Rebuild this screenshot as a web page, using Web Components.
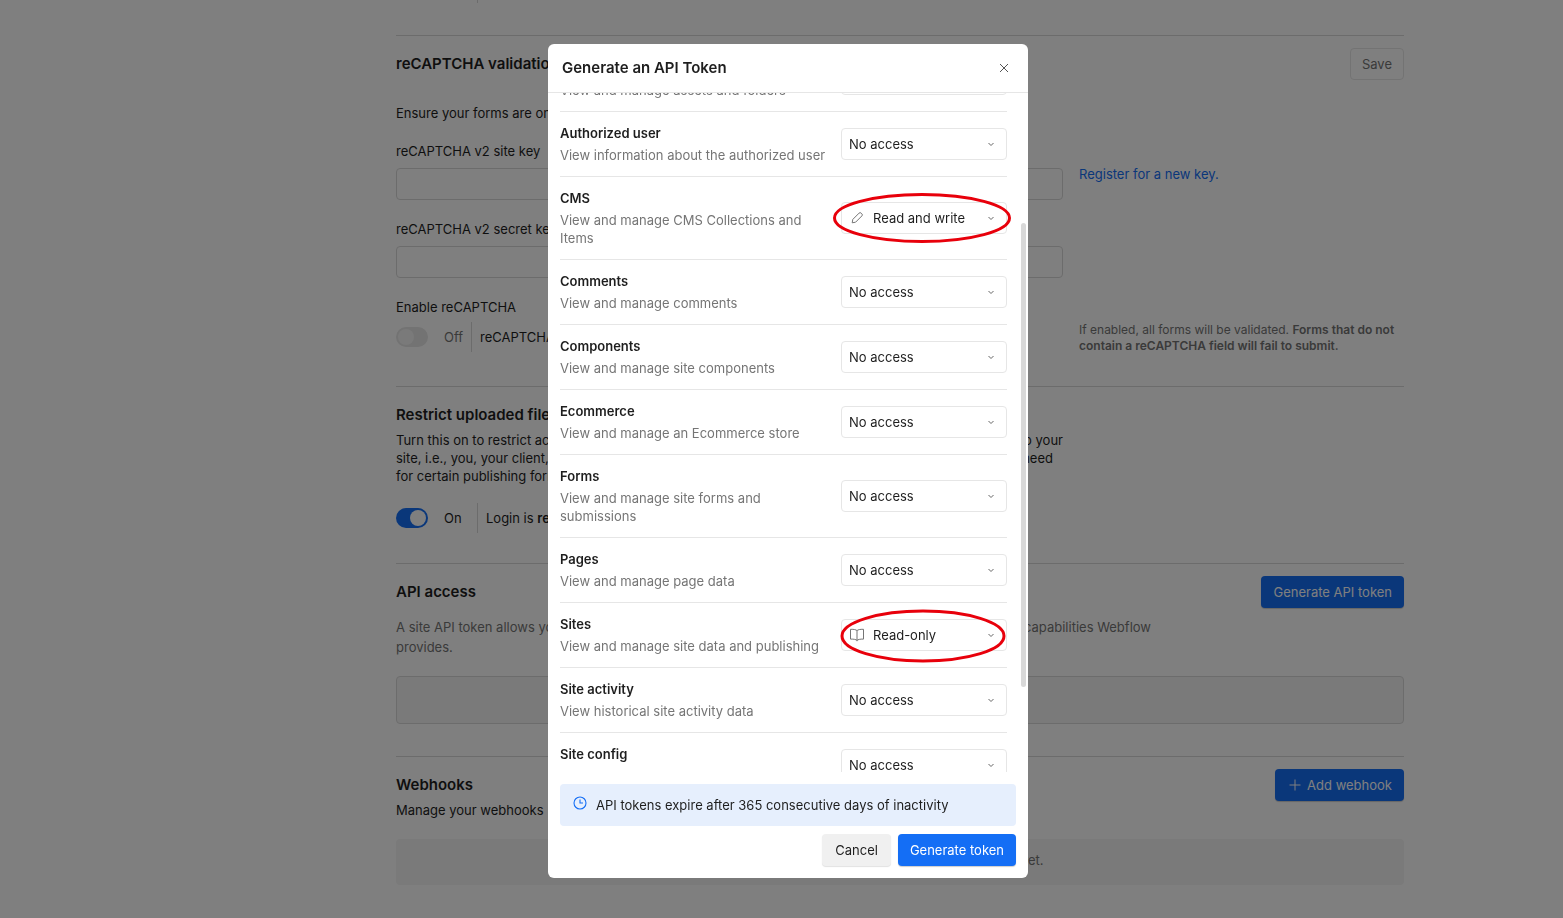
<!DOCTYPE html>
<html lang="en"><head><meta charset="utf-8"><title>Generate an API Token</title>
<style>
html,body{margin:0;height:100%;overflow:hidden;background:#fff;font:13px/18px Inter,"Liberation Sans",sans-serif;color:#1e1e1e}
</style></head><body>
<settings-page></settings-page>
<token-modal>
  <perm-row title="Assets" desc="View and manage assets and folders"></perm-row>
  <perm-row title="Authorized user" desc="View information about the authorized user"></perm-row>
  <perm-row title="CMS" desc="View and manage CMS Collections and Items" value="Read and write" icon="pencil"></perm-row>
  <perm-row title="Comments" desc="View and manage comments"></perm-row>
  <perm-row title="Components" desc="View and manage site components"></perm-row>
  <perm-row title="Ecommerce" desc="View and manage an Ecommerce store"></perm-row>
  <perm-row title="Forms" desc="View and manage site forms and submissions"></perm-row>
  <perm-row title="Pages" desc="View and manage page data"></perm-row>
  <perm-row title="Sites" desc="View and manage site data and publishing" value="Read-only" icon="book"></perm-row>
  <perm-row title="Site activity" desc="View historical site activity data"></perm-row>
  <perm-row title="Site config" desc=""></perm-row>
</token-modal>
<script>
const ICONS={
 pencil:'<svg width="14" height="14" viewBox="0 0 14 14" fill="none" stroke="#757575" stroke-width="1"><path d="M2.2 11.8 2.8 8.4 9.1 2.1a1.4 1.4 0 0 1 2 0l.8.8a1.4 1.4 0 0 1 0 2L5.6 11.2z"/></svg>',
 book:'<svg width="16" height="14" viewBox="0 0 16 14" fill="none" stroke="#757575" stroke-width="1"><path d="M8 2.6C7 1.7 5 1.2 1.5 1.3v9.8C5 11 7 11.5 8 12.4c1-.9 3-1.4 6.5-1.3V1.3C11 1.2 9 1.7 8 2.6z"/><path d="M8 2.6v10.6"/></svg>',
 chevron:'<svg width="10" height="10" viewBox="0 0 10 10" fill="none" stroke="#666" stroke-width="1"><path d="M2.5 4 5 6.5 7.5 4"/></svg>'
};
class UiButton extends HTMLElement{connectedCallback(){
 const k=this.getAttribute('kind')||'ghost';
 this.attachShadow({mode:'open'}).innerHTML=`<style>
 :host{display:inline-flex;align-items:center;justify-content:center;gap:6px;height:32px;box-sizing:border-box;padding:0 12px;border-radius:4px;font:13px/18px Inter,"Liberation Sans",sans-serif;white-space:nowrap;
 ${k==='primary'?'background:#146ef5;color:#fff;box-shadow:0 1px 1px rgba(0,0,0,.2)':k==='muted'?'background:#f0f0f0;color:#1e1e1e;padding:0 13px;box-shadow:0 1px 1px rgba(0,0,0,.12)':'border:1px solid #e6e6e6;color:#757575;padding:0 11px'}}
 </style><slot></slot>`;}}
customElements.define('ui-button',UiButton);
class UiToggle extends HTMLElement{connectedCallback(){
 const on=this.hasAttribute('on');
 this.attachShadow({mode:'open'}).innerHTML=`<style>
 :host{display:block;width:32px;height:20px;border-radius:10px;box-sizing:border-box;padding:2px;background:${on?'#146ef5':'#e6e6e6'}}
 i{display:block;width:16px;height:16px;border-radius:50%;background:${on?'#fff':'#f5f5f5'};margin-left:${on?'12px':'0'}}
 </style><i></i>`;}}
customElements.define('ui-toggle',UiToggle);
class PermSelect extends HTMLElement{connectedCallback(){
 const v=this.getAttribute('value')||'No access',ic=this.getAttribute('icon');
 this.attachShadow({mode:'open'}).innerHTML=`<style>
 :host{display:flex;align-items:center;flex:none;width:166px;height:32px;box-sizing:border-box;border:1px solid #e6e6e6;border-radius:4px;padding:0 10px 0 7px;background:#fff;color:#1e1e1e}
 .ic{display:flex;width:16px;justify-content:center;margin-right:8px}
 .v{flex:1}
 .c{display:flex}
 </style>${ic?`<span class="ic">${ICONS[ic]}</span>`:''}<span class="v">${v}</span><span class="c">${ICONS.chevron}</span>`;}}
customElements.define('perm-select',PermSelect);
class PermRow extends HTMLElement{connectedCallback(){
 const g=a=>this.getAttribute(a);
 const val=g('value')?` value="${g('value')}"`:'',ic=g('icon')?` icon="${g('icon')}"`:'';
 this.attachShadow({mode:'open'}).innerHTML=`<style>
 :host{display:flex;align-items:center;gap:12px;box-sizing:border-box;padding:12px 0;border-top:1px solid #e6e6e6}
 :host(:first-child){border-top:0;padding-top:13px}
 .t{flex:1;min-width:0}
 b{display:block;font-weight:600;color:#1e1e1e;margin-bottom:4px}
 span{display:block;color:#757575;min-height:18px}
 </style><div class="t"><b>${g('title')}</b><span>${g('desc')}</span></div><perm-select${val}${ic}></perm-select>`;}}
customElements.define('perm-row',PermRow);
class TokenModal extends HTMLElement{connectedCallback(){
 this.attachShadow({mode:'open'}).innerHTML=`<style>
 :host{position:fixed;inset:0;display:block;box-sizing:border-box;padding:44px 0 40px 548px;background:rgba(0,0,0,.5)}
 .m{position:relative;width:480px;height:834px;background:#fff;border-radius:6px;display:flex;flex-direction:column;overflow:hidden}
 header{flex:none;height:49px;box-sizing:border-box;border-bottom:1px solid #e6e6e6;display:flex;align-items:center;justify-content:space-between;padding:0 19px 0 14px}
 h2{margin:0;font:600 15px/20px Inter,"Liberation Sans",sans-serif;color:#1e1e1e}
 .list{flex:none;height:679px;overflow:hidden;padding:0 21px 0 12px}
 .inner{margin-top:-47px}
 .note{flex:none;margin:12px 12px 0;height:42px;box-sizing:border-box;background:#e6effd;border-radius:4px;display:flex;align-items:center;gap:9px;padding:0 14px 0 13px;color:#1e1e1e}
 .note svg{margin-top:-4px}
 footer{flex:none;display:flex;justify-content:flex-end;gap:7px;margin:8px 12px 0}
 .bar{position:absolute;left:473px;top:179px;width:5px;height:464px;border-radius:3px;background:#d8d8d8}
 .marks{position:absolute;left:0;top:0;pointer-events:none}
 </style><div class="m">
 <header><h2>Generate an API Token</h2><svg width="10" height="10" viewBox="0 0 10 10" stroke="#555" stroke-width="1"><path d="M1 1l8 8M9 1l-8 8"/></svg></header>
 <div class="list"><div class="inner"><slot></slot></div></div>
 <div class="note"><svg width="14" height="14" viewBox="0 0 14 14" fill="none" stroke="#146ef5" stroke-width="1.1"><circle cx="7" cy="7" r="6"/><path d="M7 3.5V7h3"/></svg><span>API tokens expire after 365 consecutive days of inactivity</span></div>
 <footer><ui-button kind="muted">Cancel</ui-button><ui-button kind="primary">Generate token</ui-button></footer>
 <div class="bar"></div>
 <svg class="marks" width="480" height="834" fill="none" stroke="#e8000b" stroke-width="3"><ellipse cx="374" cy="174" rx="87.5" ry="23.5"/><ellipse cx="375" cy="592" rx="81" ry="25"/></svg>
 </div>`;}}
customElements.define('token-modal',TokenModal);
class SettingsSection extends HTMLElement{connectedCallback(){
 this.attachShadow({mode:'open'}).innerHTML=`<style>
 :host{display:block;border-top:1px solid #d9d9d9}
 </style><slot></slot>`;}}
customElements.define('settings-section',SettingsSection);
class SettingsPage extends HTMLElement{connectedCallback(){
 this.attachShadow({mode:'open'}).innerHTML=`<style>
 :host{display:block;box-sizing:border-box;height:918px;overflow:hidden;padding:0 159px 0 396px;color:#1e1e1e}
 .tail{width:1px;height:3px;background:#d9d9d9;margin:0 0 32px 81px}
 .head{display:flex;justify-content:space-between;align-items:center;height:32px}
 h3{margin:0;font:600 15px/20px Inter,"Liberation Sans",sans-serif;white-space:nowrap}
 .grid{display:grid;grid-template-columns:667px 325px;column-gap:16px}
 .input{height:32px;box-sizing:border-box;border:1px solid #d9d9d9;border-radius:4px}
 p{margin:0;white-space:nowrap}
 .line{display:flex;justify-content:space-between;white-space:nowrap}
 .row{display:flex;align-items:center}
 .row em{font-style:normal;margin-left:16px}
 .sep{width:1px;height:30px;background:#d9d9d9}
 .help{font-size:12px;line-height:16px;color:#757575}
 .help b{font-weight:600}
 a{color:#146ef5}
 .gray{color:#757575}
 .box{border:1px solid #d9d9d9;border-radius:4px;background:#f5f5f5;box-sizing:border-box}
 .box2{border-radius:4px;background:#f5f5f5;display:flex;align-items:center;justify-content:center;color:#757575;height:46px;box-sizing:border-box;padding-bottom:4px}
 </style>
 <div class="tail"></div>
 <settings-section>
  <div class="head" style="margin-top:12px"><h3>reCAPTCHA validation</h3><ui-button>Save</ui-button></div>
  <p style="margin-top:24px">Ensure your forms are only submitted by humans</p>
  <div class="grid" style="margin-top:20px;row-gap:0">
   <div><div>reCAPTCHA v2 site key</div><div class="input" style="margin-top:8px"></div></div>
   <div style="padding-top:23px"><a>Register for a new key.</a></div>
   <div style="padding-top:20px"><div>reCAPTCHA v2 secret key</div><div class="input" style="margin-top:8px"></div></div>
   <div></div>
   <div style="padding-top:20px"><div>Enable reCAPTCHA</div>
    <div class="row" style="margin-top:6px;height:30px"><ui-toggle></ui-toggle><em class="gray" style="width:27px">Off</em><span class="sep" style="margin:0 8px 0 0"></span><span>reCAPTCHA is off</span></div></div>
   <div class="help" style="padding-top:44px">If enabled, all forms will be validated. <b>Forms that do not contain a reCAPTCHA field will fail to submit.</b></div>
  </div>
 </settings-section>
 <settings-section style="margin-top:32px">
  <h3 style="margin-top:18px">Restrict uploaded files</h3>
  <div style="margin-top:6px;width:667px">
   <div class="line"><span>Turn this on to restrict access</span><span>to your</span></div>
   <div class="line"><span>site, i.e., you, your client,</span><span style="margin-right:10px">need</span></div>
   <div class="line"><span>for certain publishing formats</span></div>
  </div>
  <div class="row" style="margin-top:18px;height:30px"><ui-toggle on></ui-toggle><em style="width:33px">On</em><span class="sep" style="margin-right:8px"></span><span>Login is <b style="font-weight:600">required</b></span></div>
 </settings-section>
 <settings-section style="margin-top:30px">
  <div class="head" style="margin-top:12px"><h3>API access</h3><ui-button kind="primary">Generate API token</ui-button></div>
  <div class="gray" style="margin-top:9px;line-height:20px">
   <div class="line" style="width:755px"><span>A site API token allows you</span><span>capabilities Webflow</span></div>
   <div>provides.</div>
  </div>
  <div class="box" style="height:48px;margin-top:19px"></div>
 </settings-section>
 <settings-section style="margin-top:32px">
  <div class="head" style="margin-top:12px"><h3>Webhooks</h3><ui-button kind="primary" style="padding-left:14px"><svg width="12" height="12" viewBox="0 0 12 12" stroke="#fff" stroke-width="1"><path d="M6 .5v11M.5 6h11"/></svg>Add webhook</ui-button></div>
  <p>Manage your webhooks</p>
  <div class="box2" style="margin-top:20px">No webhooks have been added to this site yet.</div>
 </settings-section>`;}}
customElements.define('settings-page',SettingsPage);
</script></body></html>
